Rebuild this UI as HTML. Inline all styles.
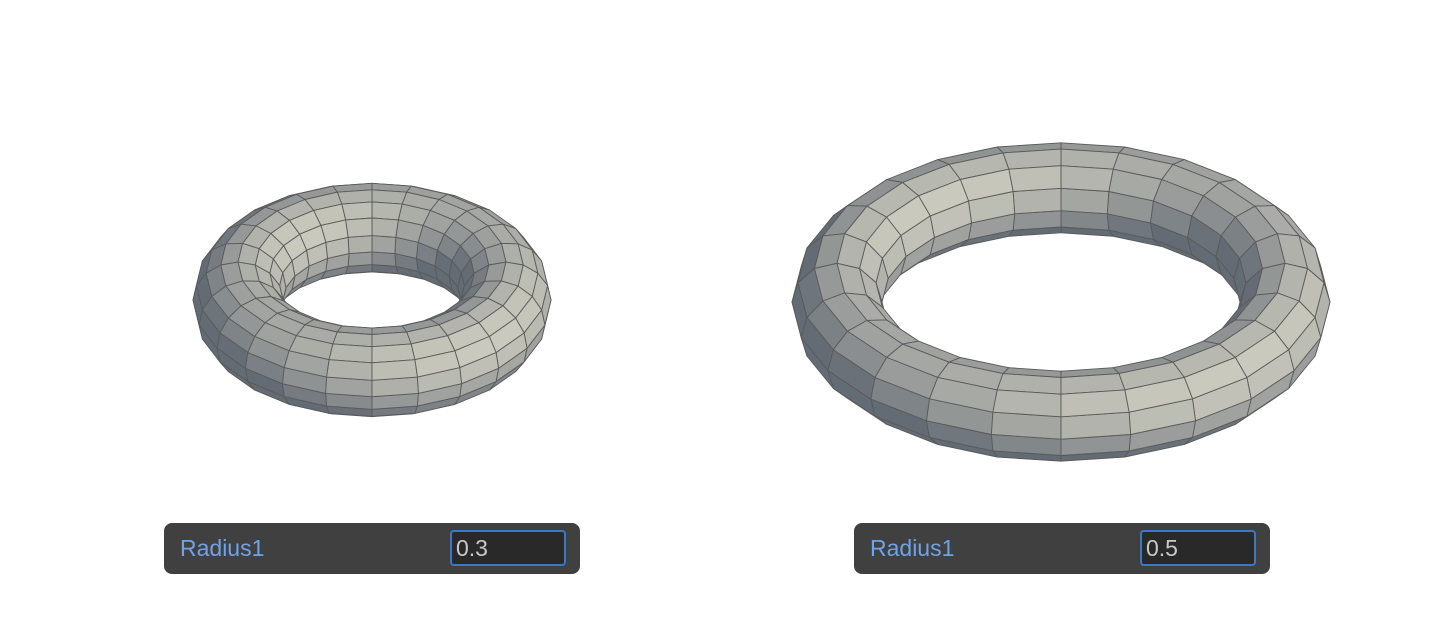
<!DOCTYPE html>
<html><head><meta charset="utf-8"><style>
html,body{margin:0;padding:0;background:#fff;width:1434px;height:640px;overflow:hidden;font-family:"Liberation Sans",sans-serif}
svg{position:absolute;left:0;top:0}
.panel{position:absolute;top:523px;width:416px;height:51px;background:#404040;border-radius:8px}
.lab{position:absolute;left:16px;top:12px;font-size:23px;color:#6ea3e8}
.inp{position:absolute;left:286px;top:7px;width:116px;height:36px;background:#292929;border:2px solid #3a78c8;border-radius:4px;box-sizing:border-box;font-size:23px;color:#c9c9c9;padding-left:4px;line-height:32px}
</style></head><body>
<svg id="s" width="1434" height="640" viewBox="0 0 1434 640"></svg>
<div class="panel" style="left:164px"><div class="lab">Radius1</div><div class="inp">0.3</div></div>
<div class="panel" style="left:854px"><div class="lab">Radius1</div><div class="inp">0.5</div></div>
<script>
function torus(cx,cy,R,r,s,NU,NV){
  var c=Math.sqrt(1-s*s),out=[];
  var L=[0.55,-0.55,0.63];var ln=Math.hypot(L[0],L[1],L[2]);L=L.map(function(a){return a/ln});
  function P(u,v){var w=R+r*Math.cos(v);var X=w*Math.cos(u),Y=w*Math.sin(u),Z=r*Math.sin(v);
    return [cx+X, cy-(Y*s+Z*c), -Y*c+Z*s];}
  for(var i=0;i<NU;i++)for(var j=0;j<NV;j++){
    var u0=2*Math.PI*i/NU,u1=2*Math.PI*(i+1)/NU,v0=2*Math.PI*j/NV,v1=2*Math.PI*(j+1)/NV;
    var um=(u0+u1)/2,vm=(v0+v1)/2;
    var n=[Math.cos(vm)*Math.cos(um),Math.cos(vm)*Math.sin(um),Math.sin(vm)];
    var vis=-n[1]*c+n[2]*s; if(vis<-0.05)continue;
    var pts=[P(u0,v0),P(u1,v0),P(u1,v1),P(u0,v1)];
    var d=(pts[0][2]+pts[1][2]+pts[2][2]+pts[3][2])/4;
    var l=Math.max(0,n[0]*L[0]+n[1]*L[1]+n[2]*L[2]);
    var t=0.2+0.72*l;
    var col=[Math.round(70+(215-70)*t),Math.round(80+(213-80)*t),Math.round(96+(198-96)*t)];
    out.push({d:d,p:pts,c:col});
  }
  out.sort(function(a,b){return a.d-b.d});
  var h='';
  out.forEach(function(f){h+='<polygon points="'+f.p.map(function(q){return q[0].toFixed(1)+','+q[1].toFixed(1)}).join(' ')+'" fill="rgb('+f.c+')" stroke="#5a5a5a" stroke-width="0.9" stroke-linejoin="round"/>';});
  return h;
}
document.getElementById('s').innerHTML=torus(372,300,134,45,0.54,24,16)+torus(1061,302,224,45,0.51,24,12);
</script>
</body></html>
